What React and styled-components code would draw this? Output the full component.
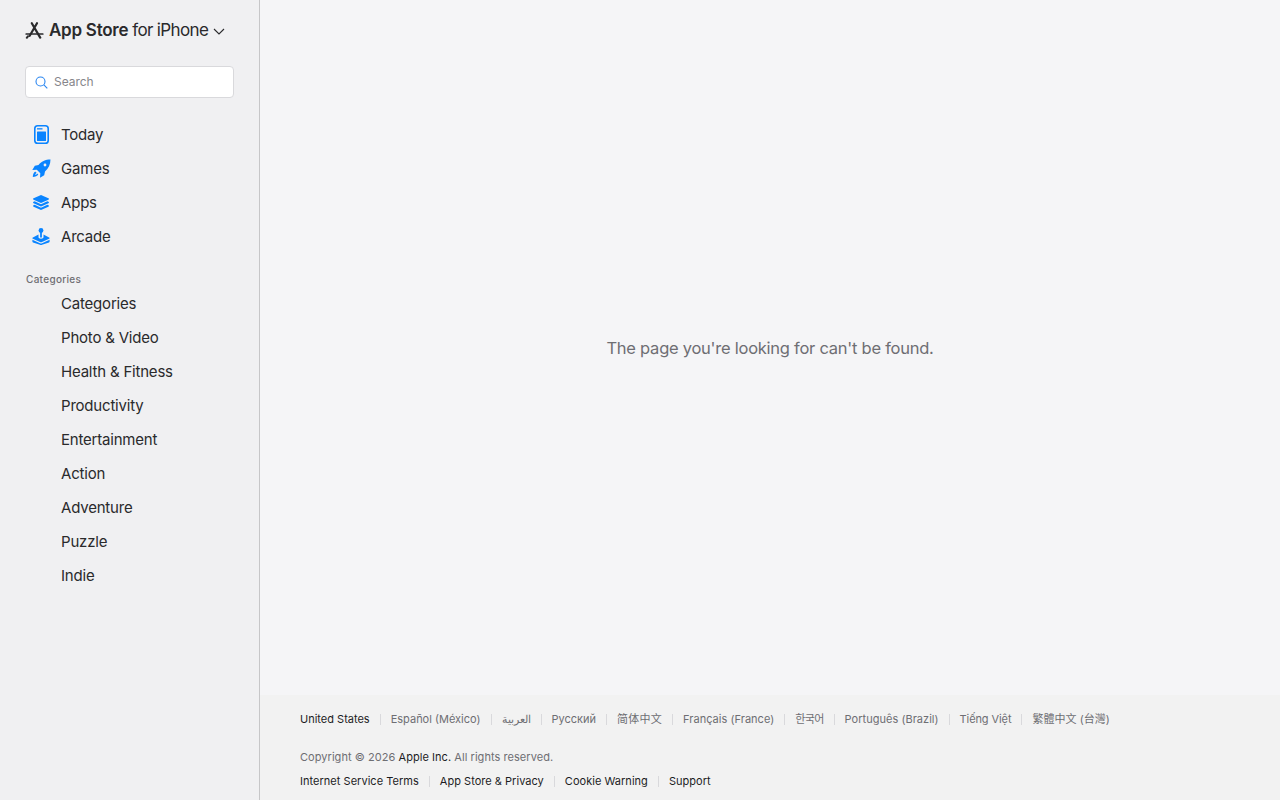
import React from 'react';
import styled, { createGlobalStyle } from 'styled-components';

const Global = createGlobalStyle`
  html, body {
    margin: 0;
    padding: 0;
    height: 100%;
  }
  body {
    font-family: Inter, "Liberation Sans", "Noto Sans CJK SC", sans-serif;
    background: #f5f5f7;
  }
`;

const Page = styled.div`
  display: flex;
  width: 100%;
  height: 800px;
  overflow: hidden;
`;
const Sidebar = styled.aside`
  width: 209px;
  flex-shrink: 0;
  background: #f0f0f2;
  border-right: 1px solid #c6c6c8;
  padding: 19px 25px 0 25px;
`;
const Brand = styled.div`
  display: flex;
  align-items: center;
  height: 22px;
  color: #2a2a2c;
  font-size: 17px;
  white-space: nowrap;
`;
const BrandName = styled.span`
  font-weight: 600;
  margin-left: 5px;
  letter-spacing: -0.25px;
`;
const BrandSuffix = styled.span`
  font-weight: 400;
  margin-left: 4px;
  letter-spacing: -0.65px;
`;
const ChevronMark = styled.svg`
  margin: 3px 0 0 5px;
`;
const SearchBox = styled.div`
  display: flex;
  align-items: center;
  gap: 6px;
  height: 32px;
  margin-top: 25px;
  padding-left: 9px;
  box-sizing: border-box;
  background: #fff;
  border: 1px solid #d9d9dc;
  border-radius: 4px;
  color: #86868b;
  font-size: 12px;
`;
const SearchText = styled.span`
  margin-bottom: 2px;
  letter-spacing: -0.05px;
`;
const NavList = styled.nav`
  display: flex;
  flex-direction: column;
  margin-top: 20px;
`;
const NavItem = styled.a`
  display: flex;
  align-items: center;
  height: 34px;
  color: #2a2a2c;
  font-size: 15px;
  line-height: 20px;
  letter-spacing: -0.2px;
`;
const IconSlot = styled.span`
  display: flex;
  align-items: center;
  justify-content: center;
  width: 32px;
  margin: 0 4px 2px 0;
`;
const SectionLabel = styled.div`
  margin: 18px 0 0 1px;
  height: 14px;
  line-height: 14px;
  font-size: 10px;
  font-weight: 500;
  letter-spacing: 0.3px;
  color: #6e6e73;
`;
const CategoryList = styled.div`
  display: flex;
  flex-direction: column;
  padding-left: 36px;
  margin-top: 1px;
`;
const Main = styled.main`
  flex: 1;
  display: flex;
  flex-direction: column;
  min-width: 0;
`;
const Content = styled.div`
  height: 695px;
  display: flex;
  justify-content: center;
  padding-top: 337px;
  box-sizing: border-box;
  color: #6e6e73;
  font-size: 16.5px;
  line-height: 22px;
  letter-spacing: -0.25px;
`;
const Footer = styled.footer`
  flex: 1;
  background: #f2f2f2;
  padding: 16px 40px 0;
  font-size: 11px;
  line-height: 16px;
  color: #6e6e73;
`;
const LinkRow = styled.div`
  display: flex;
  align-items: center;
  height: 16px;
  margin-top: ${({ $gap }) => $gap || 0}px;
  white-space: nowrap;
`;
const FooterLink = styled.span`
  color: ${({ $dark }) => ($dark ? '#1d1d1f' : '#6e6e73')};
  letter-spacing: ${({ $spacing }) => $spacing || 0}px;
  padding-right: 10px;
  margin-right: 10px;
  border-right: 1px solid #d9d9dc;
  height: 11px;
  display: flex;
  align-items: center;
  &:last-child {
    border-right: 0;
  }
`;
const Copyright = styled.div`
  margin-top: 22px;
  height: 16px;
  letter-spacing: 0.05px;
`;
const Strong = styled.span`
  color: #1d1d1f;
`;

const AppStoreLogo = () => (
  <svg width="19" height="17" viewBox="0 0 19 17" fill="none" stroke="#2a2a2c" strokeLinecap="round">
    <path d="M6.800 1.200l8.400 14.400M12 1.200L4.700 13.800" strokeWidth="2.200" />
    <path d="M1.200 12h16.600" strokeWidth="1.700" />
    <path d="M1.800 15.800l1.100-1.500" strokeWidth="2" />
  </svg>
);
const Chevron = () => (
  <ChevronMark width="12" height="7" viewBox="0 0 12 7" fill="none" stroke="#2a2a2c" strokeWidth="1.100">
    <path d="M1 1l5 5 5-5" />
  </ChevronMark>
);
const SearchIcon = () => (
  <svg width="13" height="13" viewBox="0 0 13 13" fill="none" stroke="#2a86f0" strokeWidth="1.100">
    <circle cx="5.500" cy="5.500" r="4.500" />
    <path d="M8.900 8.900l3.400 3.400" />
  </svg>
);
const TodayIcon = () => (
  <svg width="15" height="19" viewBox="0 0 15 19">
    <rect x="0.800" y="0.800" width="13.400" height="17.400" rx="2.800" fill="none" stroke="#0a84ff" strokeWidth="1.600" />
    <rect x="3" y="3.200" width="5.500" height="1.300" fill="#0a84ff" />
    <rect x="3" y="6.500" width="9" height="9.500" rx="0.500" fill="#0a84ff" />
  </svg>
);
const GamesIcon = () => (
  <svg width="19" height="19" viewBox="0 0 19 19" fill="#0a84ff">
    <path
      fillRule="evenodd"
      d="M18.500.500C13.500.500 9 2.500 6.500 6L2.800 6.800.300 11l4.500-.3 3.500 3.500-.3 4.500 4.200-2.500.8-3.700C16.500 9.500 18.500 5.500 18.500.500zM13 4.600a1.400 1.400 0 1 1 0 2.800 1.400 1.400 0 0 1 0-2.800z"
    />
    <path d="M3.200 12.500C1.500 13.500.900 15.500.800 18c2.500-.1 4.500-.7 5.500-2.400l-1.100-1.100c-.4.900-1 1.300-2 1.500.2-1 .6-1.600 1.500-2z" />
  </svg>
);
const AppsIcon = () => (
  <svg width="16" height="15" viewBox="0 0 16 15" fill="#0a84ff">
    <path d="M8 0l7.400 3.300c.8.400.8 1 0 1.400L8 8 .6 4.700c-.8-.4-.8-1 0-1.400z" />
    <path d="M1.600 6.300L8 9.200l6.400-2.900 1 .5c.8.400.8 1 0 1.400L8 11.500.6 8.200c-.8-.4-.8-1 0-1.400z" />
    <path d="M1.600 9.800L8 12.700l6.400-2.900 1 .5c.8.400.8 1 0 1.400L8 15 .6 11.700c-.8-.4-.8-1 0-1.400z" />
  </svg>
);
const ArcadeIcon = () => (
  <svg width="18" height="17" viewBox="0 0 18 17" fill="#0a84ff">
    <circle cx="9" cy="2.500" r="2.400" />
    <rect x="8.100" y="4" width="1.800" height="5.500" />
    <path d="M6.500 6.400v2.900c0 .9 1.100 1.400 2.500 1.400s2.500-.5 2.500-1.400V6.400l5.600 3c.7.400.7 1 0 1.400L10 14.100c-.6.300-1.400.3-2 0L.9 10.800c-.7-.4-.7-1 0-1.400z" />
    <path d="M.4 11.800L8 15.300c.6.300 1.400.3 2 0l7.600-3.500v1.800c0 .4-.2.600-.6.800L10 16.800c-.6.300-1.400.3-2 0l-7-2.400c-.4-.2-.6-.4-.6-.8z" />
  </svg>
);

const mainNav = [
  { label: 'Today', icon: <TodayIcon /> },
  { label: 'Games', icon: <GamesIcon /> },
  { label: 'Apps', icon: <AppsIcon /> },
  { label: 'Arcade', icon: <ArcadeIcon /> },
];
const categories = ['Categories', 'Photo & Video', 'Health & Fitness', 'Productivity', 'Entertainment', 'Action', 'Adventure', 'Puzzle', 'Indie'];
const languages = [
  { label: 'United States' },
  { label: 'Español (México)' },
  { label: 'العربية' },
  { label: 'Русский' },
  { label: '简体中文', spacing: 0.25 },
  { label: 'Français (France)', spacing: 0.03 },
  { label: '한국어', spacing: -0.7 },
  { label: 'Português (Brazil)', spacing: 0.03 },
  { label: 'Tiếng Việt', spacing: -0.1 },
  { label: '繁體中文 (台灣)', spacing: 0.03 },
];
const legal = ['Internet Service Terms', 'App Store & Privacy', 'Cookie Warning', 'Support'];

export default function App() {
  return (
    <Page>
      <Global />
      <Sidebar>
        <Brand>
          <AppStoreLogo />
          <BrandName>App Store</BrandName>
          <BrandSuffix>for iPhone</BrandSuffix>
          <Chevron />
        </Brand>
        <SearchBox>
          <SearchIcon />
          <SearchText>Search</SearchText>
        </SearchBox>
        <NavList>
          {mainNav.map((item) => (
            <NavItem key={item.label}>
              <IconSlot>{item.icon}</IconSlot>
              {item.label}
            </NavItem>
          ))}
        </NavList>
        <SectionLabel>Categories</SectionLabel>
        <CategoryList>
          {categories.map((c) => (
            <NavItem key={c}>{c}</NavItem>
          ))}
        </CategoryList>
      </Sidebar>
      <Main>
        <Content>The page you're looking for can't be found.</Content>
        <Footer>
          <LinkRow>
            {languages.map((l, i) => (
              <FooterLink key={l.label} $dark={i === 0} $spacing={l.spacing}>{l.label}</FooterLink>
            ))}
          </LinkRow>
          <Copyright>
            Copyright © 2026 <Strong>Apple Inc.</Strong> All rights reserved.
          </Copyright>
          <LinkRow $gap={8}>
            {legal.map((l) => (
              <FooterLink key={l} $dark $spacing={0.03}>{l}</FooterLink>
            ))}
          </LinkRow>
        </Footer>
      </Main>
    </Page>
  );
}
